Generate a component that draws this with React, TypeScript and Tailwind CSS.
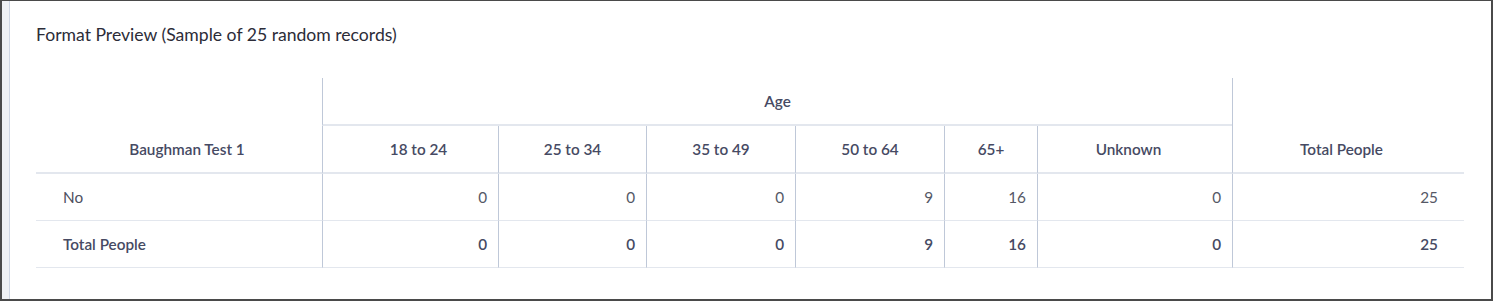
import React from "react";

const cols = ["18 to 24", "25 to 34", "35 to 49", "50 to 64", "65+", "Unknown"];
const colPad = ["pl-[16px]", "", "", "", "", "pr-[13px]"];
const noRow = ["0", "0", "0", "9", "16", "0"];

export default function App() {
  const vline = "border-l border-[#bfc8d8]";
  const hline2 = "border-b-2 border-b-[#e3e7ee]";
  const hline1 = "border-b border-b-[#e3e7ee]";
  const head = "font-semibold text-[#464a63]";
  return (
    <div
      className="w-[1493px] h-[301px] flex bg-white border-t border-l-2 border-r-2 border-b-2 border-[#4a4a4a] box-border overflow-hidden"
      style={{ fontFamily: "Lato, 'Open Sans', sans-serif" }}
    >
      <div className="w-[8px] bg-[#eff1f4] border-r border-[#cfd6e3] shrink-0" />
      <div className="flex-1 pl-[26px] pr-[27px] pt-[21px]">
        <div className="text-[17.6px] leading-[26px] text-[#2c2c38]">
          Format Preview (Sample of 25 random records)
        </div>
        <div className="mt-[30px] grid grid-cols-[286px_176px_148px_149px_149px_93px_195px_232px] grid-rows-[48px_48px_47px_47px] text-[15.3px] leading-[20px]">
          <div
            className={`row-span-2 pt-[48px] pl-[16px] ${hline2} flex items-center justify-center ${head}`}
          >
            <div className="h-[46px] flex items-center">Baughman Test 1</div>
          </div>
          <div
            className={`col-span-6 ${vline} ${hline2} flex items-center justify-center ${head}`}
          >
            Age
          </div>
          <div
            className={`row-start-1 col-start-8 row-span-2 pt-[48px] pr-[14px] ${vline} ${hline2} flex items-center justify-center ${head}`}
          >
            <div className="h-[46px] flex items-center">Total People</div>
          </div>
          {cols.map((c, i) => (
            <div
              key={c}
              className={`${vline} ${hline2} ${colPad[i]} flex items-center justify-center ${head}`}
            >
              {c}
            </div>
          ))}
          <div className={`${hline1} flex items-center pl-[27px] text-[#4d5060]`}>No</div>
          {noRow.map((v, i) => (
            <div
              key={"n" + i}
              className={`${vline} ${hline1} flex items-center justify-end pr-[11px] text-[#555866]`}
            >
              {v}
            </div>
          ))}
          <div className={`${vline} ${hline1} flex items-center justify-end pr-[26px] text-[#555866]`}>
            25
          </div>
          <div className={`${hline1} flex items-center pl-[27px] ${head}`}>
            Total People
          </div>
          {noRow.map((v, i) => (
            <div
              key={"t" + i}
              className={`${vline} ${hline1} flex items-center justify-end pr-[11px] ${head}`}
            >
              {v}
            </div>
          ))}
          <div className={`${vline} ${hline1} flex items-center justify-end pr-[26px] ${head}`}>
            25
          </div>
        </div>
      </div>
    </div>
  );
}
